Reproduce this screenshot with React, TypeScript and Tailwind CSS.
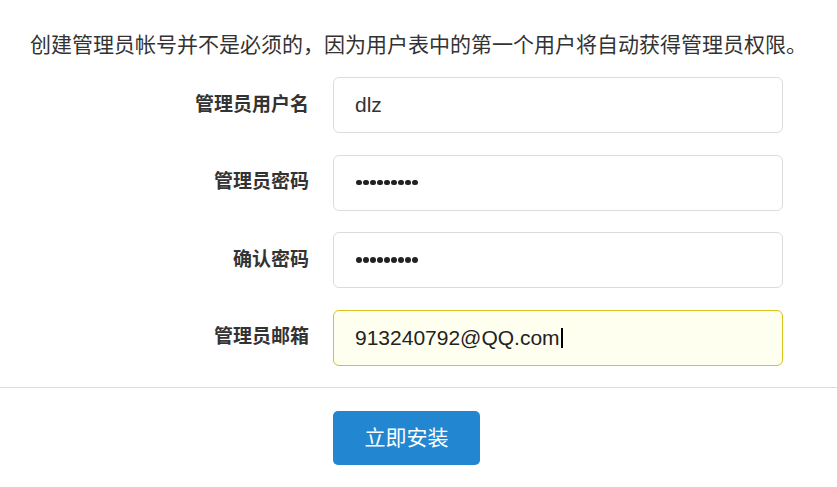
const font = "font-['Liberation_Sans','Noto_Sans_CJK_SC',sans-serif]";

function Row({ label, children }: { label: string; children: React.ReactNode }) {
  return (
    <div className="flex items-center">
      <div className="w-[309px] text-right text-[19px] font-bold text-[#333]">{label}</div>
      <div className="ml-[24px] w-[450px]">{children}</div>
    </div>
  );
}

function Field({ value, focused }: { value: string; focused?: boolean }) {
  return (
    <div
      className={
        focused
          ? "flex h-[56px] items-center rounded-[6px] border border-[#d9c31e] bg-[#fffff0] px-[21px] text-[21px] text-[#222]"
          : "flex h-[56px] items-center rounded-[6px] border border-[#dcdcdc] bg-white px-[21px] text-[21px] text-[#333]"
      }
    >
      <span>{value}</span>
      {focused && <span className="ml-px h-[20px] w-[2px] bg-black" />}
    </div>
  );
}

function Dots() {
  return (
    <div className="flex h-[56px] items-center gap-[1.5px] rounded-[6px] border border-[#dcdcdc] bg-white px-[22px]">
      {Array.from({ length: 9 }).map((_, i) => (
        <span key={i} className="h-[5.5px] w-[5.5px] rounded-full bg-[#222]" />
      ))}
    </div>
  );
}

export default function App() {
  return (
    <div className={`${font} h-[487px] w-[837px] overflow-hidden bg-white`}>
      <p className="pt-[30px] text-center text-[21px] leading-[30px] text-[#333]">
        创建管理员帐号并不是必须的，因为用户表中的第一个用户将自动获得管理员权限。
      </p>
      <div className="mt-[17px] flex flex-col gap-[21.5px]">
        <Row label="管理员用户名">
          <Field value="dlz" />
        </Row>
        <Row label="管理员密码">
          <Dots />
        </Row>
        <Row label="确认密码">
          <Dots />
        </Row>
        <Row label="管理员邮箱">
          <Field value="913240792@QQ.com" focused />
        </Row>
      </div>
      <div className="mt-[21px] border-t border-[#dddddd] pt-[23px] pb-[22px]">
        <div className="ml-[333px]">
          <button className="h-[54px] w-[147px] rounded-[5px] bg-[#2386d0] text-[21px] text-white">
            立即安装
          </button>
        </div>
      </div>
      <div className="border-t border-[#dddddd]" />
    </div>
  );
}
